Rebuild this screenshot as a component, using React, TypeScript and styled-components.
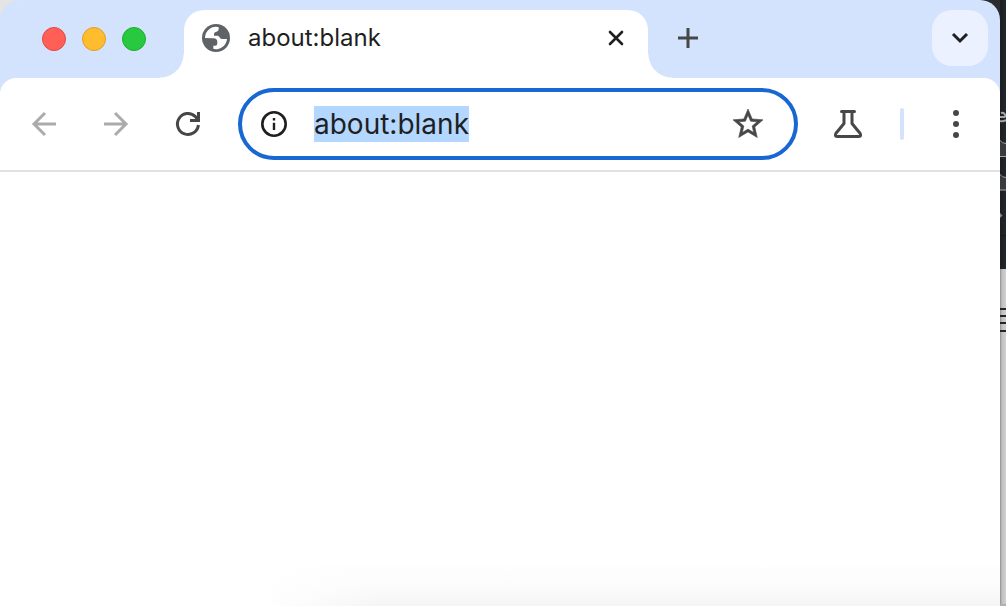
import React, { useEffect, useRef } from "react";
import styled, { createGlobalStyle } from "styled-components";

const GlobalStyle = createGlobalStyle`
  * { box-sizing: border-box; }
  body { margin: 0; font-family: Inter, "Liberation Sans", sans-serif; color: #1f1f1f; }
  svg { display: block; flex: none; }
`;

const Desktop = styled.div`
  display: grid;
  grid-template-columns: minmax(0, 1fr) 6px;
  min-height: 100vh;
  background: linear-gradient(to right, #e4e4e4 50%, #2a2c2e 50%);
`;

const BrowserWindow = styled.div`
  display: flex;
  flex-direction: column;
  overflow: hidden;
  border-radius: 20px 20px 0 0;
  background: #d3e3fd;
`;

const TabStrip = styled.header`
  display: flex;
  align-items: flex-start;
  height: 78px;
  padding: 10px 12px 0 42px;
`;

const WindowControls = styled.div`
  display: flex;
  gap: 16px;
  padding: 17px 38px 0 0;
`;

const Light = styled.button<{ $fill: string; $edge: string }>`
  width: 24px;
  height: 24px;
  padding: 0;
  border: 1px solid ${(p) => p.$edge};
  border-radius: 50%;
  background: ${(p) => p.$fill};
`;

const Tab = styled.div`
  position: relative;
  display: flex;
  align-items: center;
  flex: 0 1 464px;
  min-width: 0;
  height: 68px;
  padding: 0 20px 12px 18px;
  border-radius: 20px 20px 0 0;
  background: #fff;

  &::before,
  &::after {
    content: "";
    position: absolute;
    bottom: 0;
    width: 24px;
    height: 24px;
  }
  &::before {
    right: 100%;
    background: radial-gradient(circle at 0 0, transparent 23px, #fff 24px);
  }
  &::after {
    left: 100%;
    background: radial-gradient(circle at 100% 0, transparent 23px, #fff 24px);
  }
`;

const TabTitle = styled.span`
  flex: 1;
  min-width: 0;
  padding-left: 18px;
  overflow: hidden;
  font-size: 24px;
  line-height: 32px;
  white-space: nowrap;
`;

const IconButton = styled.button<{ $size?: number; $tint?: string }>`
  display: grid;
  place-items: center;
  flex: none;
  width: ${(p) => p.$size ?? 56}px;
  height: ${(p) => p.$size ?? 56}px;
  padding: 0;
  border: 0;
  border-radius: 20px;
  background: ${(p) => p.$tint ?? "transparent"};
  color: #474747;

  &:disabled { color: #ababab; }
`;

const NewTab = styled.div`
  padding-left: 12px;
  margin-right: auto;
`;

const Toolbar = styled.nav`
  display: flex;
  align-items: center;
  height: 94px;
  padding: 0 16px;
  border-bottom: 2px solid #e1e1e1;
  border-radius: 16px 16px 0 0;
  background: #fff;
`;

const NavGroup = styled.div`
  display: flex;
  gap: 16px;
  margin-right: 22px;
`;

const AddressBar = styled.form`
  display: flex;
  align-items: center;
  flex: 1;
  min-width: 0;
  height: 72px;
  padding: 0 18px 0 12px;
  border: 4px solid #1967d2;
  border-radius: 36px;
`;

const AddressInput = styled.input`
  flex: 1;
  min-width: 0;
  height: 36px;
  margin-left: 20px;
  padding: 0;
  border: 0;
  outline: 0;
  background: transparent;
  color: #1f1f1f;
  font: 28px/36px Inter, "Liberation Sans", sans-serif;

  &::selection { background: #b3d7ff; color: #1f1f1f; }
`;

const Actions = styled.div`
  display: flex;
  align-items: center;
  gap: 24px;
  margin-left: 22px;
`;

const Divider = styled.span`
  width: 4px;
  height: 32px;
  border-radius: 2px;
  background: #d3e3fd;
`;

const Page = styled.main`
  flex: 1;
  background:
    linear-gradient(to right, #fff 260px, transparent 380px),
    linear-gradient(to top, #f5f5f5, #fbfbfb 18px, #fff 46px);
`;

const Backdrop = styled.aside`
  display: flex;
  flex-direction: column;
  overflow: hidden;
`;

const DarkApp = styled.div`
  height: 269px;
  background: linear-gradient(to right, #1a1e22, #23282d);
`;

const LightApp = styled.div`
  flex: 1;
  border-bottom: 2px solid #b0b0b0;
  background: linear-gradient(to right, #8e8e8e, #c2c2c2 2px, #cfcfcf);
`;

const Globe = () => (
  <svg width="28" height="28" viewBox="0 0 28 28">
    <circle cx="14" cy="14" r="14" fill="#5f6368" />
    <path
      fill="#fff"
      d="M3 14A11 11 0 0 1 16.700 3.200V5Q16.700 7.300 14.500 7.700 12 8 12 10V11.700H15.500Q17 11.700 17.500 13.200 18.200 15 20 15H25A11 11 0 0 1 11.300 24.800V21.800H13.200Q15.300 21.800 15.300 19.500V18Q15.300 14.300 11.500 14.300Z"
    />
  </svg>
);

const line = { fill: "none", stroke: "currentColor", strokeWidth: 3 };

export default function App() {
  const address = useRef<HTMLInputElement>(null);

  useEffect(() => {
    address.current?.focus();
    address.current?.select();
  }, []);

  return (
    <>
      <GlobalStyle />
      <Desktop>
        <BrowserWindow>
          <TabStrip>
            <WindowControls>
              <Light $fill="#ff5f57" $edge="#e2463f" aria-label="Close window" />
              <Light $fill="#febc2e" $edge="#dfa023" aria-label="Minimize window" />
              <Light $fill="#28c840" $edge="#1dad2b" aria-label="Zoom window" />
            </WindowControls>
            <Tab>
              <Globe />
              <TabTitle>about:blank</TabTitle>
              <IconButton $size={24} aria-label="Close tab">
                <svg width="24" height="24" viewBox="0 0 24 24" color="#1f1f1f">
                  <path {...line} strokeWidth="2.600" strokeLinecap="round" d="M6 6 18 18M18 6 6 18" />
                </svg>
              </IconButton>
            </Tab>
            <NewTab>
              <IconButton aria-label="New tab">
                <svg width="24" height="24" viewBox="0 0 24 24">
                  <path {...line} d="M12 2V22M2 12H22" />
                </svg>
              </IconButton>
            </NewTab>
            <IconButton $tint="#ebf1fe" aria-label="Search tabs">
              <svg width="24" height="24" viewBox="0 0 24 24" color="#1f1f1f">
                <path {...line} d="M5 8 12 15 19 8" />
              </svg>
            </IconButton>
          </TabStrip>
          <Toolbar>
            <NavGroup>
              <IconButton disabled aria-label="Back">
                <svg width="32" height="32" viewBox="0 0 32 32">
                  <path {...line} d="M28 16H6M17 5 6 16 17 27" />
                </svg>
              </IconButton>
              <IconButton disabled aria-label="Forward">
                <svg width="32" height="32" viewBox="0 0 32 32">
                  <path {...line} d="M4 16H26M15 5 26 16 15 27" />
                </svg>
              </IconButton>
              <IconButton aria-label="Reload">
                <svg width="32" height="32" viewBox="0 0 32 32">
                  <path {...line} d="M26.400 17A10.500 10.500 0 1 1 23.400 8.600L26 11.500" />
                  <path fill="currentColor" d="M25 4H28V14H18V11H22.500L25 9.500Z" />
                </svg>
              </IconButton>
            </NavGroup>
            <AddressBar onSubmit={(e) => e.preventDefault()}>
              <IconButton type="button" $size={40} aria-label="View site information">
                <svg width="28" height="28" viewBox="0 0 28 28" color="#1f1f1f">
                  <circle {...line} strokeWidth="2.600" cx="14" cy="14" r="11.700" />
                  <path {...line} strokeWidth="2.400" d="M14 12.800V20M14 8V10.600" />
                </svg>
              </IconButton>
              <AddressInput ref={address} aria-label="Address" defaultValue="about:blank" spellCheck={false} />
              <IconButton type="button" aria-label="Bookmark this tab">
                <svg width="36" height="36" viewBox="0 0 24 24" fill="currentColor" stroke="currentColor" strokeWidth="0.400">
                  <path d="M22 9.240l-7.190-.62L12 2 9.190 8.630 2 9.240l5.460 4.730L5.820 21 12 17.270 18.180 21l-1.630-7.030L22 9.240zM12 15.400l-3.760 2.270 1-4.280-3.320-2.880 4.380-.38L12 6.100l1.710 4.040 4.380.38-3.320 2.880 1 4.280L12 15.400z" />
                </svg>
              </IconButton>
            </AddressBar>
            <Actions>
              <IconButton aria-label="Experiments">
                <svg width="32" height="32" viewBox="0 0 32 32">
                  <path
                    {...line}
                    strokeLinejoin="round"
                    strokeLinecap="round"
                    d="M9.500 3.500H22.500M12 3.500V15.500L3.800 25.500Q2.500 28.500 5 28.500H27Q29.500 28.500 28.200 25.500L20 15.500V3.500"
                  />
                </svg>
              </IconButton>
              <Divider />
              <IconButton aria-label="Menu">
                <svg width="32" height="32" viewBox="0 0 32 32" fill="currentColor">
                  <circle cx="16" cy="5" r="3" />
                  <circle cx="16" cy="16" r="3" />
                  <circle cx="16" cy="27" r="3" />
                </svg>
              </IconButton>
            </Actions>
          </Toolbar>
          <Page />
        </BrowserWindow>
        <Backdrop aria-hidden="true">
          <DarkApp>
            <svg width="6" height="269" viewBox="0 0 6 269">
              <path fill="#393b41" d="M0 142 3 144H6V156H0ZM0 176 3 178H6V190H0Z" />
              <path fill="none" stroke="#a3a5a8" d="M0 140.500Q2 143.500 6 143.500M0 156.500H6M0 174.500Q2 177.500 6 177.500M0 190H6" />
              <path fill="none" stroke="#a3a5a8" strokeWidth="2" d="M0 117H5.500M5.500 117Q5 112 1 113M0 121Q3 122 6 120" />
              <path fill="#85888c" d="M0 213 2.500 215.500 0 218Z" />
              <path stroke="#15191c" d="M0 235.500H6" />
            </svg>
          </DarkApp>
          <LightApp>
            <svg width="6" height="70" viewBox="0 0 6 70">
              <path stroke="#262626" strokeWidth="2" d="M0 40H6M0 47H6M0 54H6M0 62H6" />
            </svg>
          </LightApp>
        </Backdrop>
      </Desktop>
    </>
  );
}
